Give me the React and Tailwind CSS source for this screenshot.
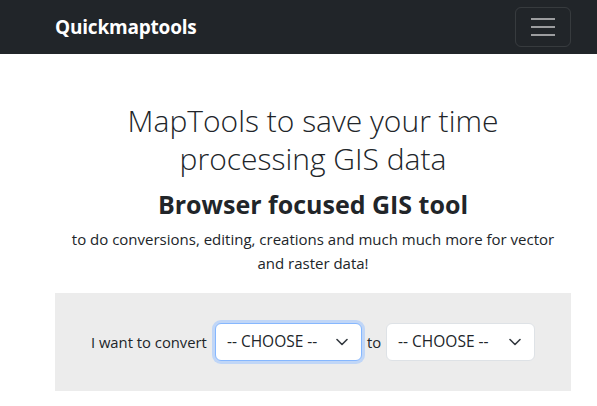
import React from 'react'

const font = { fontFamily: '"Open Sans", "Noto Sans", sans-serif' }

const Chevron = () => (
  <svg width="12" height="8" viewBox="0 0 12 8" fill="none">
    <path d="M1 1.5l5 5 5-5" stroke="#343a40" strokeWidth="1.6" strokeLinecap="round" strokeLinejoin="round" />
  </svg>
)

const Choose = ({ focused, width }) => (
  <div
    className={`flex items-center justify-between h-[38px] pl-[11px] pr-[13px] bg-white rounded-[6px] border text-[15.5px] text-[#212529] ${
      focused ? 'border-[#86b7fe] ring-[3px] ring-[#c0d6f7]' : 'border-[#dee2e6]'
    }`}
    style={{ width }}
  >
    <span>-- CHOOSE --</span>
    <Chevron />
  </div>
)

export default function App() {
  return (
    <div className="min-h-[406px] bg-white" style={font}>
      <nav className="h-[54px] bg-[#212529] flex items-center">
        <div className="ml-[55px] w-[516px] flex items-center justify-between">
          <a href="#" className="text-white font-bold text-[19px] tracking-[-0.2px]">
            Quickmaptools
          </a>
          <button className="w-[56px] h-[40px] rounded-[6px] border border-white/10 flex flex-col items-center justify-center gap-[6px]">
            <span className="block w-[24px] h-[2px] bg-[#9c9d9f]" />
            <span className="block w-[24px] h-[2px] bg-[#9c9d9f]" />
            <span className="block w-[24px] h-[2px] bg-[#9c9d9f]" />
          </button>
        </div>
      </nav>
      <main className="ml-[55px] w-[516px] text-center text-[#212529]">
        <h1 className="pt-[48px] text-[30px] leading-[38px] font-light px-[60px]">
          MapTools to save your time processing GIS data
        </h1>
        <h3 className="mt-[11px] text-[25px] leading-[30px] font-bold">Browser focused GIS tool</h3>
        <p className="mt-[8px] text-[15px] leading-[24px] px-[6px]">
          to do conversions, editing, creations and much much more for vector and raster data!
        </p>
        <div className="mt-[18px] h-[98px] bg-[#ececec] flex items-center justify-center text-[14.8px]">
          <span className="mr-[8px]">I want to convert</span>
          <Choose focused width="147px" />
          <span className="mx-[5px]">to</span>
          <Choose width="149px" />
        </div>
      </main>
    </div>
  )
}
